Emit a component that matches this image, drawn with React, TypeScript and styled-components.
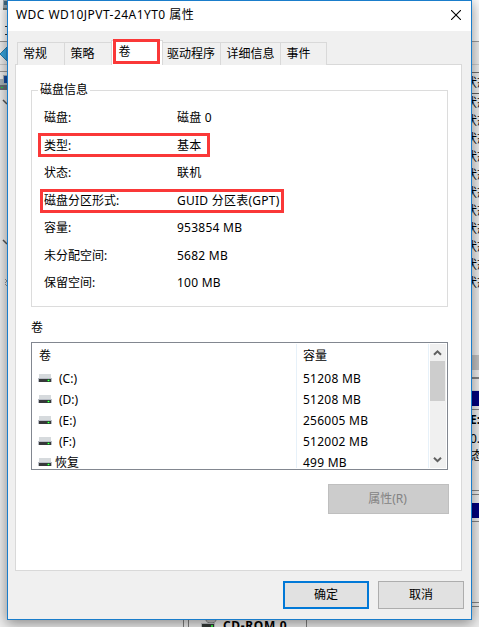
import React from "react";
import styled, { createGlobalStyle } from "styled-components";

const GlobalStyle = createGlobalStyle`
  * { box-sizing: border-box; }
  body { margin: 0; overflow: hidden; }
`;

const Desktop = styled.div`
  position: relative;
  width: 479px;
  height: 627px;
  overflow: hidden;
  background: #f0f0f0;
  color: #000;
  font: 12px/18px "Noto Sans", "Noto Sans CJK SC", sans-serif;
  white-space: nowrap;
`;

const Behind = styled.div`
  display: flex;
  justify-content: space-between;
  height: 619px;
`;

const Strip = styled.div`
  display: flex;
  flex-direction: column;
  width: 7px;
  height: 619px;
  overflow: hidden;
`;

const Band = styled.div<{ $h: number; $bg?: string; $line?: string }>`
  flex: none;
  height: ${(p) => p.$h}px;
  background: ${(p) => p.$bg ?? "#f0f0f0"};
  ${(p) => p.$line && `border-bottom: 1px solid ${p.$line};`}
`;

const Peek = styled.div<{ $h?: number; $shift?: number; $bold?: boolean }>`
  flex: none;
  height: ${(p) => p.$h ?? 18}px;
  line-height: ${(p) => p.$h ?? 18}px;
  text-indent: ${(p) => p.$shift ?? -7}px;
  font-weight: ${(p) => (p.$bold ? 700 : 400)};
`;

const StripSvg = styled.svg`
  display: block;
  flex: none;
`;

const BottomStrip = styled.div`
  display: flex;
  height: 8px;
  overflow: hidden;
  padding-left: 184px;
`;

const DriveCell = styled.div`
  display: flex;
  width: 119px;
  height: 8px;
  padding-left: 12px;
  gap: 6px;
  border: solid #808080;
  border-width: 0 1px;
  box-shadow: -4px 0 0 0 #f0f0f0, -5px 0 0 #808080;
  margin-left: 4px;
  font-weight: 700;
  line-height: 14px;
  letter-spacing: 0.65px;
`;

const Dialog = styled.section`
  position: absolute;
  left: 7px;
  top: 0;
  width: 465px;
  height: 620px;
  border: 1px solid #1a7dcb;
  background: #f0f0f0;
  box-shadow: 0 3px 13px 1px rgba(0, 0, 0, 0.42);
`;

const TitleBar = styled.header`
  display: flex;
  align-items: center;
  justify-content: space-between;
  height: 30px;
  padding: 0 10px 2px 8px;
  background: #fff;
`;

const Title = styled.span`
  letter-spacing: 0.45px;
`;

const Tabs = styled.nav`
  display: flex;
  align-items: flex-end;
  height: 34px;
  padding-left: 9px;
  margin-bottom: -1px;
`;

const Tab = styled.div<{ $w: number; $pad: number; $active?: boolean }>`
  position: relative;
  z-index: ${(p) => (p.$active ? 1 : 0)};
  width: ${(p) => p.$w}px;
  height: ${(p) => (p.$active ? 25 : 23)}px;
  padding-left: ${(p) => p.$pad}px;
  line-height: 22px;
  border: 1px solid #d9d9d9;
  border-bottom: 0;
  margin-right: -1px;
  background: ${(p) => (p.$active ? "#fff" : "#f0f0f0")};
`;

const Highlight = styled.i<{ $x: number; $y: number; $w: number; $h: number }>`
  position: absolute;
  left: ${(p) => p.$x}px;
  top: ${(p) => p.$y}px;
  width: ${(p) => p.$w}px;
  height: ${(p) => p.$h}px;
  border: 3px solid #fa3838;
`;

const Page = styled.main`
  width: 447px;
  height: 507px;
  margin-left: 7px;
  padding: 16px 12px 0 15px;
  border: 1px solid #d9d9d9;
  background: #fff;
`;

const Group = styled.fieldset`
  width: 417px;
  height: 226px;
  margin: 0;
  padding: 0;
  border: 1px solid #dcdcdc;
  min-width: 0;
`;

const Legend = styled.legend`
  height: 18px;
  margin-left: 6px;
  padding: 0 2px;
`;

const Fields = styled.dl`
  display: grid;
  grid-template-columns: 133px 1fr;
  grid-auto-rows: 27.5px;
  align-items: center;
  margin: 5.4px 0 0 12px;
`;

const Field = styled.div`
  position: relative;
  display: grid;
  grid-column: 1 / -1;
  grid-template-columns: subgrid;
`;

const Term = styled.dt``;

const Value = styled.dd`
  margin: 0;
  letter-spacing: 0.25px;
`;

const SectionLabel = styled.h2`
  margin: 12px 0 5px;
  height: 18px;
  font-size: 12px;
  font-weight: 400;
`;

const VolumeList = styled.div`
  display: flex;
  width: 417px;
  height: 128px;
  padding: 1px;
  border: 1px solid #828790;
  overflow: hidden;
`;

const Column = styled.div<{ $w: number; $pad: number }>`
  width: ${(p) => p.$w}px;
  height: 124px;
  overflow: hidden;
  padding-left: ${(p) => p.$pad}px;
  border-right: 1px solid #e7f1f9;
`;

const ColumnHead = styled.div`
  height: 24px;
  line-height: 23px;
`;

const Cell = styled.div`
  display: flex;
  height: 21px;
  line-height: 21px;
  letter-spacing: 0.25px;
`;

const DriveSvg = styled.svg`
  display: block;
  flex: none;
  margin: 6px 0 0 -1px;
`;

const VolumeName = styled.span<{ $gap: number }>`
  margin-left: ${(p) => p.$gap}px;
  letter-spacing: 0;
`;

const ScrollBar = styled.div`
  display: flex;
  flex-direction: column;
  justify-content: space-between;
  width: 16px;
  height: 124px;
  margin-left: 1px;
  background: #f0f0f0;
`;

const Thumb = styled.div`
  width: 15px;
  height: 40px;
  margin-bottom: auto;
  background: #cdcdcd;
`;

const Button = styled.button<{ $primary?: boolean }>`
  width: 86px;
  height: 28px;
  padding: 0;
  font: inherit;
  color: #000;
  background: #e1e1e1;
  border: ${(p) => (p.$primary ? "2px solid #0078d7" : "1px solid #adadad")};
  &:disabled {
    display: block;
    width: 121px;
    height: 30px;
    margin: 14px 0 0 297px;
    padding-right: 2px;
    color: #838383;
    background: #ccc;
    border-color: #bfbfbf;
  }
`;

const Footer = styled.footer`
  display: flex;
  gap: 9px;
  padding: 10px 0 0 275px;
`;

const DriveIcon = () => (
  <DriveSvg width="14" height="8" viewBox="0 0 14 8" shapeRendering="crispEdges">
    <path d="M1 0h12v4H1z" fill="#d6dadd" />
    <path d="M0 4h14v4H0z" fill="#b9bdc6" />
    <path d="M1 5h12v3H1z" fill="#37383a" />
    <path d="M9 6h3v1H9z" fill="#16b52a" />
    <path d="M10 5h1v3h-1z" fill="#0e8c20" />
    <path d="M10 6h1v1h-1z" fill="#63ff63" />
  </DriveSvg>
);

const Arrow = ({ down = false }: { down?: boolean }) => (
  <svg width="15" height="17" viewBox="0 0 15 17">
    <path
      d={down ? "M4 6.7 7.5 10.2 11 6.7" : "M4 10.8 7.5 7.3 11 10.8"}
      fill="none"
      stroke="#606060"
      strokeWidth="2"
    />
  </svg>
);

const facts = [
  { term: "磁盘:", value: "磁盘 0" },
  { term: "类型:", value: "基本", mark: { $x: -6, $y: -4, $w: 172, $h: 24 } },
  { term: "状态:", value: "联机" },
  { term: "磁盘分区形式:", value: "GUID 分区表(GPT)", mark: { $x: -4, $y: -3, $w: 244, $h: 24 } },
  { term: "容量:", value: "953854 MB" },
  { term: "未分配空间:", value: "5682 MB" },
  { term: "保留空间:", value: "100 MB" },
];

const volumes = [
  { name: "(C:)", size: "51208 MB" },
  { name: "(D:)", size: "51208 MB" },
  { name: "(E:)", size: "256005 MB" },
  { name: "(F:)", size: "512002 MB" },
  { name: "恢复", size: "499 MB" },
];

const tabs = [
  { label: "常规", width: 48, pad: 5 },
  { label: "策略", width: 48, pad: 5.5 },
  { label: "卷", width: 52, pad: 6.5, active: true },
  { label: "驱动程序", width: 59, pad: 4 },
  { label: "详细信息", width: 61, pad: 5.5 },
  { label: "事件", width: 47, pad: 5.5 },
];

export default function App() {
  return (
    <Desktop>
      <GlobalStyle />
      <Behind>
        <Strip>
          <StripSvg width="7" height="619" viewBox="0 0 7 619">
            <path d="M0 10h7v31H0z" fill="#fff" />
            <path d="M3 0h4v8H3z" fill="#9ba7ae" />
            <path d="M4 1h3v4H4z" fill="#456b82" />
            <path d="M3 8h4v2H3z" fill="#66716c" />
            <path d="M5 26.5h2M5 34.5h2" stroke="#333" />
            <path d="M0 41.5h7M0 71.5h7" stroke="#999" />
            <path d="M0 54 7 47v14z" fill="#38a9e4" stroke="#287dac" />
            <path d="M0 64.5h7" stroke="#ccc" />
            <path d="M0 79h3v-4h4v10H0z" fill="#a8b4bb" />
            <path d="M4 76h3v7H4z" fill="#174da0" />
            <path d="M0 85h7v5H0z" fill="#687277" />
            <path d="M1 87h2v1H1z" fill="#26d44d" />
            <path d="m3 100 4 4M3 240l4 4" stroke="#555" strokeWidth="1.5" />
            <path d="m5 279 2 2-2 2M5 284l2 2" stroke="#999" fill="none" />
          </StripSvg>
        </Strip>
        <Strip>
          <Band $h={42} $bg="#fff" $line="#a0a0a0" />
          <Band $h={23} $line="#d2d2d2" />
          <Band $h={8} $line="#707070" />
          <Peek $h={20}>状态</Peek>
          <Band $h={1} $bg="#606060" />
          {Array.from({ length: 11 }, (_, i) => (
            <Peek key={i}>状态</Peek>
          ))}
          <Band $h={63} />
          <Band $h={15} $bg="#c4c4c4" />
          <Band $h={7} />
          <Band $h={2} $bg="#858585" />
          <Band $h={12} $line="#dedede" />
          <Band $h={15} $bg="#000080" />
          <Band $h={4} $line="#888" />
          <Peek $h={20} $shift={-2} $bold>E:</Peek>
          <Peek $h={17} $shift={-2}>0.</Peek>
          <Peek $h={17} $shift={-1}>态</Peek>
          <Band $h={27} $line="#888" />
          <Band $h={4} $line="#888" />
          <Band $h={8} />
          <Band $h={15} $bg="#000080" />
          <Band $h={4} $line="#888" />
          <Band $h={81} $line="#888" />
          <Band $h={4} $line="#888" />
        </Strip>
      </Behind>
      <BottomStrip>
        <DriveCell>
          <svg width="16" height="8" viewBox="0 0 16 8">
            <ellipse cx="10" cy="1" rx="5" ry="3" fill="#c6c6c6" stroke="#888" />
            <path d="M0 4h14v4H0z" fill="#c0c4c8" />
            <path d="M1 5h12v3H1z" fill="#353b38" />
            <path d="M10 6h2v2h-2z" fill="#3bea43" />
          </svg>
          CD-ROM 0
        </DriveCell>
      </BottomStrip>
      <Dialog>
        <TitleBar>
          <Title>WDC WD10JPVT-24A1YT0 属性</Title>
          <svg width="10" height="10" viewBox="0 0 10 10">
            <path d="m0 0 10 10M10 0 0 10" stroke="#000" strokeWidth="1.1" />
          </svg>
        </TitleBar>
        <Tabs>
          {tabs.map((t) => (
            <Tab key={t.label} $w={t.width} $pad={t.pad} $active={t.active}>
              {t.label}
              {t.active && <Highlight $x={1} $y={-2} $w={47} $h={25} />}
            </Tab>
          ))}
        </Tabs>
        <Page>
          <Group>
            <Legend>磁盘信息</Legend>
            <Fields>
              {facts.map((f) => (
                <Field key={f.term}>
                  {f.mark && <Highlight {...f.mark} />}
                  <Term>{f.term}</Term>
                  <Value>{f.value}</Value>
                </Field>
              ))}
            </Fields>
          </Group>
          <SectionLabel>卷</SectionLabel>
          <VolumeList>
            <Column $w={264} $pad={6}>
              <ColumnHead>卷</ColumnHead>
              {volumes.map((v) => (
                <Cell key={v.name}>
                  <DriveIcon />
                  <VolumeName $gap={v.name.startsWith("(") ? 7 : 3}>{v.name}</VolumeName>
                </Cell>
              ))}
            </Column>
            <Column $w={132} $pad={6}>
              <ColumnHead>容量</ColumnHead>
              {volumes.map((v) => (
                <Cell key={v.name}>{v.size}</Cell>
              ))}
            </Column>
            <ScrollBar>
              <Arrow />
              <Thumb />
              <Arrow down />
            </ScrollBar>
          </VolumeList>
          <Button disabled>属性(R)</Button>
        </Page>
        <Footer>
          <Button $primary>确定</Button>
          <Button>取消</Button>
        </Footer>
      </Dialog>
    </Desktop>
  );
}
